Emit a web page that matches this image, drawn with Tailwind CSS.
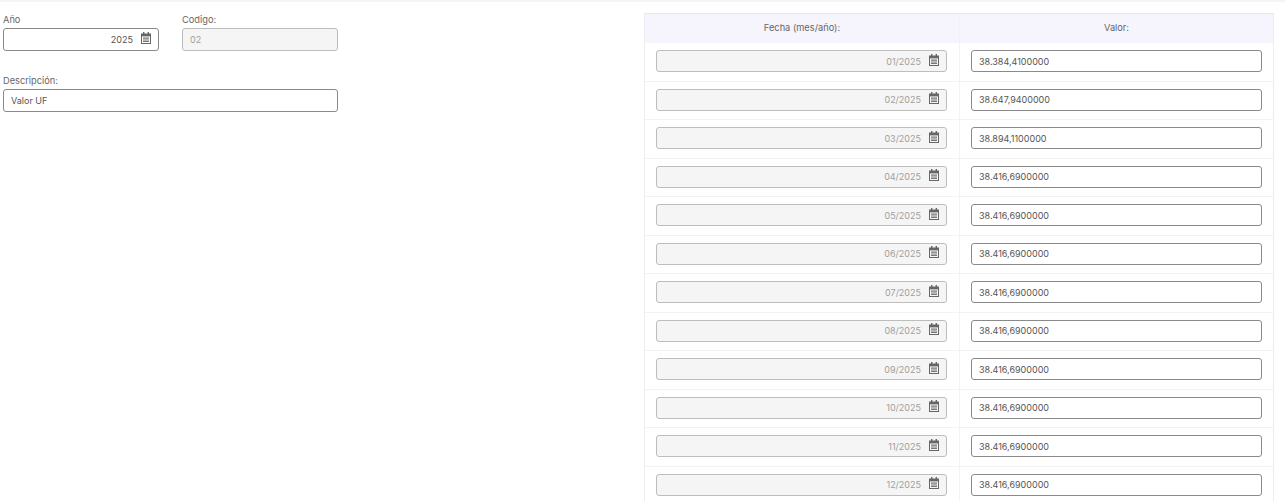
<!DOCTYPE html>
<html lang="es">
  <head>
    <meta charset="UTF-8" />
    <title>Valor UF</title>
    <script src="https://cdn.jsdelivr.net/npm/@tailwindcss/browser@4"></script>
  </head>
  <body class="bg-white font-['Inter',sans-serif] text-[9.25px] text-[#666] h-[501px] overflow-hidden">
    <div class="h-[2px] bg-[#f5f5f5]"></div>
    <main class="flex items-start">
      <!-- Form -->
      <section class="w-[644px] shrink-0 pl-[3px] pt-[12px]">
        <div class="flex gap-[23px] w-[335px]">
          <div class="w-[156px]">
            <label class="block h-[14px] leading-[12px]">Año</label>
            <div class="relative">
              <input value="2025" class="w-full h-[22.6px] pr-[25px] text-right text-[9px] text-[#555] border border-[#8a8a8a] rounded-[3px] bg-white outline-none" />
              <svg class="absolute right-[8px] top-[4px] w-[10px] h-[12px]" viewBox="0 0 10 12"><path fill="#666" d="M2 0h1.4v2H2zM6.6 0H8v2H6.6zM0 1.6h10V12H0z"/><path fill="#fff" d="M1 4.4h8V11H1z"/><path fill="#777" d="M2 5.6h6v1.2H2zM2 7.4h6v1.2H2zM2 9h6v1H2z"/></svg>
            </div>
          </div>
          <div class="w-[156px]">
            <label class="block h-[14px] leading-[12px]">Codigo:</label>
            <input value="02" disabled class="w-full h-[22.6px] px-[7px] text-[9px] text-[#a0a0a0] border border-[#bdbdbd] rounded-[3px] bg-[#f5f5f5]" />
          </div>
        </div>
        <div class="w-[335px] mt-[24.4px]">
          <label class="block h-[14px] leading-[12px]">Descripción:</label>
          <input value="Valor UF" class="w-full h-[22.6px] px-[7px] text-[9px] text-[#555] border border-[#8a8a8a] rounded-[3px] bg-white outline-none" />
        </div>
      </section>
      <!-- Values table -->
      <section class="w-[630px] shrink-0 mt-[11px] border-x border-[#ececf1]">
        <div class="grid grid-cols-[315px_1fr] h-[30px] bg-[#f6f4fd] border-t border-[#e6e6ec] text-center leading-[28px]">
          <div class="border-r border-[#f1eff9]">Fecha (mes/año):</div>
          <div>Valor:</div>
        </div>
        <div id="rows"></div>
      </section>
    </main>
    <script>
      const values = ["38.384,4100000", "38.647,9400000", "38.894,1100000", "38.416,6900000", "38.416,6900000", "38.416,6900000", "38.416,6900000", "38.416,6900000", "38.416,6900000", "38.416,6900000", "38.416,6900000", "38.416,6900000"];
      const icon = `<svg class="absolute right-[8px] top-[3.8px] w-[10px] h-[12px]" viewBox="0 0 10 12"><path fill="#666" d="M2 0h1.4v2H2zM6.6 0H8v2H6.6zM0 1.6h10V12H0z"/><path fill="#f5f5f5" d="M1 4.4h8V11H1z"/><path fill="#777" d="M2 5.6h6v1.2H2zM2 7.4h6v1.2H2zM2 9h6v1H2z"/></svg>`;
      document.getElementById("rows").innerHTML = values.map((v, i) => `
        <div class="grid grid-cols-[315px_1fr] h-[38.5px] border-b border-[#f3f3f3]">
          <div class="border-r border-[#f3f3f3] pt-[7.1px] pl-[11px] pr-[12px]"><div class="relative"><input value="${String(i + 1).padStart(2, "0")}/2025" disabled class="w-full h-[22.4px] pr-[25px] text-right text-[9px] text-[#a0a0a0] border border-[#bdbdbd] rounded-[3px] bg-[#f5f5f5]" />${icon}</div></div>
          <div class="pt-[7.1px] px-[11px]"><input value="${v}" class="w-full h-[22.4px] px-[7px] text-[9px] text-[#555] border border-[#8a8a8a] rounded-[3px] bg-white outline-none" /></div>
        </div>`).join("");
    </script>
  </body>
</html>
